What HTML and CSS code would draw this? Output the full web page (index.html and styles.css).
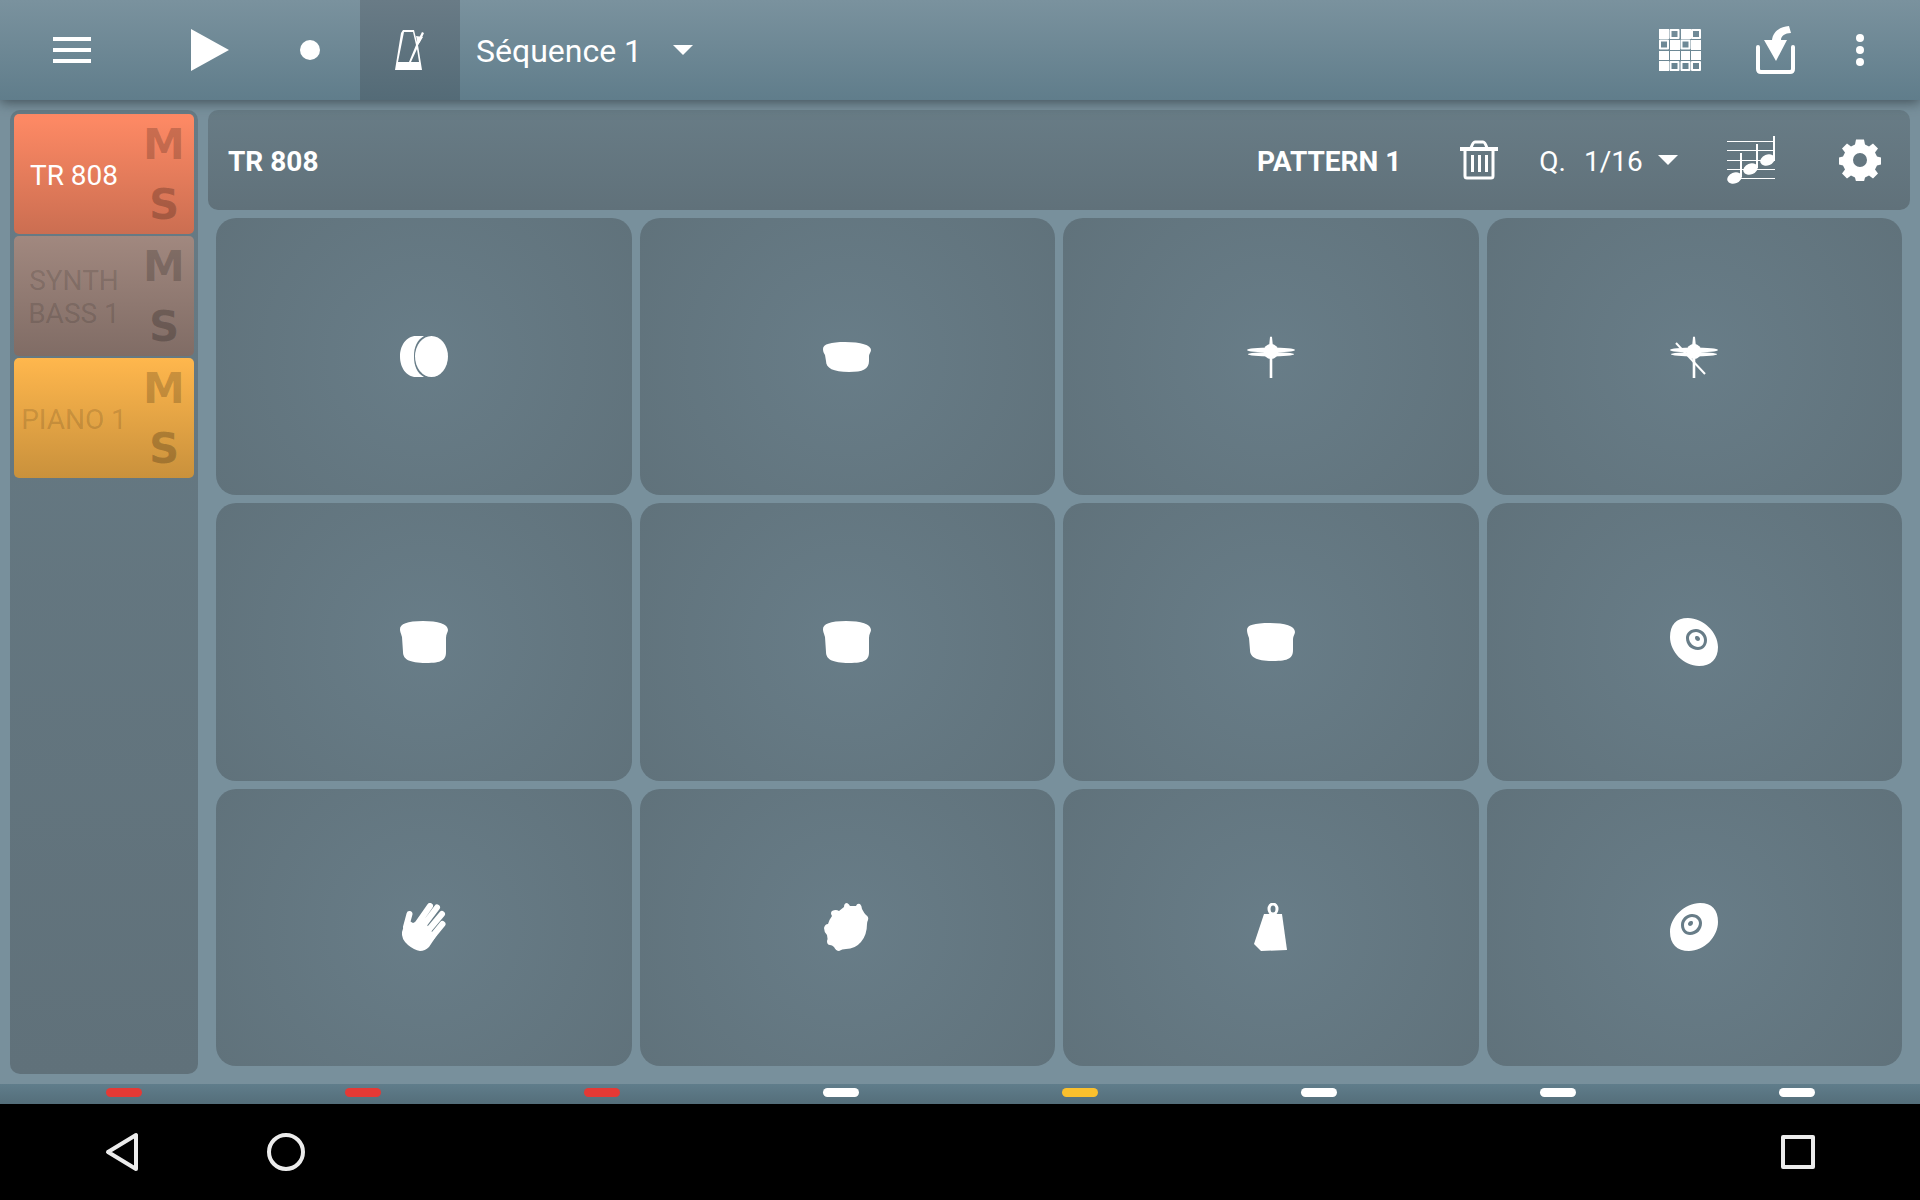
FILE: index.html
```html
<!DOCTYPE html>
<html lang="fr">
<head>
<meta charset="utf-8">
<meta name="viewport" content="width=device-width, initial-scale=1">
<title>Séquence 1</title>
<link rel="stylesheet" href="styles.css">
</head>
<body>
<svg class="sprites" aria-hidden="true">
  <symbol id="tom" viewBox="0 0 48 48"><path d="M0 11C0 6 7 3 23 3c15 0 25 3 25 9 0 2-2 4-2 8v14c0 8-4 11-20 11C9 45 3 41 3 34L2 19C1 15 0 14 0 11z"/></symbol>
  <symbol id="disc" viewBox="0 0 48 48"><path fill-rule="evenodd" d="M18 0C6 0 0 7 0 19c0 15 14 29 29 29 12 0 19-7 19-19C48 14 33 0 18 0zM26 11c6 0 11 5 11 11s-4 10-9 10c-7 0-12-5-12-12 0-5 4-9 10-9zM26 14c-4 0-7 3-7 6 0 5 5 9 9 9s6-3 6-7-4-8-8-8zM27 18c2 0 3 2 3 3s-1 2-2 2-3-1-3-3 1-2 2-2z"/></symbol>
  <symbol id="cymbal" viewBox="0 0 48 48"><ellipse cx="24" cy="17" rx="24" ry="2.400"/><ellipse cx="24" cy="21.200" rx="23" ry="2.200"/><circle cx="24" cy="18.500" r="7.500"/><path d="M23 4q1-1 2 0l1 10h-4zM22.700 24h2.600v21h-2.600z"/></symbol>
</svg>
<div class="app">
  <header class="toolbar">
    <button class="tool tool-menu" aria-label="Menu"><svg width="38" height="26" viewBox="0 0 38 26"><path d="M0 0h38v4H0zM0 11h38v4H0zM0 22h38v4H0z"/></svg></button>
    <button class="tool tool-play" aria-label="Lecture"><svg width="38" height="42" viewBox="0 0 38 42"><path d="M0 0l38 21L0 42z"/></svg></button>
    <button class="tool tool-record" aria-label="Enregistrer"><svg width="20" height="20" viewBox="0 0 20 20"><circle cx="10" cy="10" r="10"/></svg></button>
    <button class="tool tool-metronome" aria-label="Métronome" aria-pressed="true"><svg width="30" height="40" viewBox="0 0 30 40"><path fill-rule="evenodd" d="M8 0h11l3 12 5-10 2 1-4 9-2 3 4 25H0L6 3zM9 2L3 32h11l7-17L18 2zM22 19l-6 13h8z"/><path d="M21 6l7 1-5 8z"/></svg></button>
    <span class="picker picker-sequence"><select aria-label="Séquence"><option>Séquence 1</option></select><svg width="20" height="10" viewBox="0 0 20 10"><path d="M0 0h20L10 10z"/></svg></span>
    <button class="tool tool-grid" aria-label="Motifs"><svg width="42" height="42" viewBox="0 0 42 42">
      <path d="M0 0h10v10H0zM22 0h10v10H22zM11 11h10v10H11zM32 11h10v10H32zM0 22h10v9H0zM11 22h10v9H11zM22 22h9v9h-9zM32 22h10v9H32zM0 32h10v10H0z"/>
      <path class="line" d="M11.500 1h8v8h-8zM33 1h8v8h-8zM1 11.500h8v8H1zM22.500 11.500h8v8h-8zM11.500 33h8v8h-8zM22.500 33h8v8h-8zM33 33h8v8h-8z"/></svg></button>
    <button class="tool tool-export" aria-label="Importer"><svg width="40" height="48" viewBox="0 0 40 48"><path d="M8 14h8C17 6 23 1 33 0l2 7c-6 0-10 3-10 7h6L20 35z"/><path class="tray" d="M2 21v22q0 3 3 3h29q3 0 3-3V21"/></svg></button>
    <button class="tool tool-more" aria-label="Plus"><svg width="8" height="32" viewBox="0 0 8 32"><circle cx="4" cy="4" r="4"/><circle cx="4" cy="16" r="4"/><circle cx="4" cy="28" r="4"/></svg></button>
  </header>

  <div class="workspace">
    <nav class="tracks" aria-label="Pistes">
      <div class="track track-coral"><button class="track-name">TR 808</button><button class="mute">M</button><button class="solo">S</button></div>
      <div class="track track-brown"><button class="track-name">SYNTH BASS 1</button><button class="mute">M</button><button class="solo">S</button></div>
      <div class="track track-amber"><button class="track-name">PIANO 1</button><button class="mute">M</button><button class="solo">S</button></div>
    </nav>

    <main class="editor">
      <section class="panel">
        <h1 class="instrument">TR 808</h1>
        <button class="pattern">PATTERN 1</button>
        <button class="tool tool-trash" aria-label="Supprimer"><svg width="38" height="40" viewBox="0 0 38 40"><path class="stroke" d="M11 8q2-6 4-6h8q2 0 4 6M5 10v26q0 2 2 2h24q2 0 2-2V10"/><path d="M0 7h38v4H0zM11 15h3v17h-3zM18 15h3v17h-3zM25 15h3v17h-3z"/></svg></button>
        <label class="quantize-label" for="quantize">Q.</label>
        <span class="picker picker-quantize"><select id="quantize"><option>1/16</option></select><svg width="20" height="10" viewBox="0 0 20 10"><path d="M0 0h20L10 10z"/></svg></span>
        <button class="tool tool-notes" aria-label="Partition"><svg width="48" height="48" viewBox="0 0 48 48"><path d="M0 5h48v1H0zM0 14h48v1H0zM0 24h48v1H0zM0 33h48v1H0zM12 42h36v1H12zM13 17h2v24h-2zM29 8h2v24h-2zM46 0h2v25h-2z"/><ellipse cx="7.500" cy="42" rx="7.500" ry="5.500" transform="rotate(-22 7.500 42)"/><ellipse cx="23.500" cy="33" rx="7.500" ry="5.500" transform="rotate(-22 23.500 33)"/><ellipse cx="40.500" cy="24" rx="7.500" ry="5.500" transform="rotate(-22 40.500 24)"/></svg></button>
        <button class="tool tool-settings" aria-label="Réglages"><svg width="42" height="42" viewBox="-21 -21 42 42"><path fill-rule="evenodd" d="M-4-20.500h8l1 5 4 2 4-3 5 5-3 4 2 4 4 1v7l-4 1-2 4 3 4-5 5-4-3-4 2-1 4h-8l-1-4-4-2-4 3-5-5 3-4-2-4-4-1v-7l4-1 2-4-3-4 5-5 4 3 4-2zM0-7a7 7 0 1 0 0 14 7 7 0 0 0 0-14z"/></svg></button>
      </section>

      <section class="pads" aria-label="Pads">
        <button class="pad" aria-label="Grosse caisse"><svg width="48" height="48" viewBox="0 0 48 48"><path d="M16 3h8C17 7 14 14 14 23.500S17 40 24 44h-8C6 44 0 34 0 23.500S6 3 16 3z"/><ellipse cx="31.500" cy="23.500" rx="16.500" ry="20.500"/></svg></button>
        <button class="pad" aria-label="Caisse claire"><svg width="48" height="48" viewBox="0 0 48 48"><path d="M0 16c0-5 8-7 22-7 16 0 26 3 26 8 0 2-2 4-2 6v5c0 8-6 11-20 11C10 39 3 35 3 28l-1-6c-1-2-2-3-2-6z"/></svg></button>
        <button class="pad" aria-label="Charleston fermé"><svg width="48" height="48"><use href="#cymbal"/></svg></button>
        <button class="pad" aria-label="Charleston ouvert"><svg width="48" height="48" viewBox="0 0 48 48"><use href="#cymbal"/><path class="stick" d="M6 10l29 31"/></svg></button>
        <button class="pad" aria-label="Tom grave"><svg width="48" height="48"><use href="#tom"/></svg></button>
        <button class="pad" aria-label="Tom médium"><svg width="48" height="48"><use href="#tom"/></svg></button>
        <button class="pad" aria-label="Tom aigu"><svg width="48" height="48" viewBox="0 0 48 48"><path d="M0 12C0 7 7 5 23 5c15 0 25 3 25 9 0 2-2 4-2 7v11c0 8-4 11-20 11C9 43 3 39 3 32L2 20c-1-3-2-5-2-8z"/></svg></button>
        <button class="pad" aria-label="Cymbale crash"><svg width="48" height="48"><use href="#disc"/></svg></button>
        <button class="pad" aria-label="Clap"><svg width="48" height="48" viewBox="0 0 48 48"><path d="M2 29L6 16l7 4 9-4 5 6 5 7 5 3-8 12q-4 4-9 4-6-1-12-6-7-6-6-13z"/><path class="fingers" d="M6 24L9.500 11M16 23L30 3M23 23L37 4.500M26 30L42 11M31 35L42.500 21"/></svg></button>
        <button class="pad" aria-label="Maracas"><svg width="48" height="48" viewBox="0 0 48 48"><path d="M9 8q4-2 7 0l5-4q0-4 3-4 2 1 3 3h6q1-3 4-2 2 2 2 5 2 4 4 6 3 2 2 5-1 2-1 4 0 11-6 18-6 7-15 7-4 0-7 2-3 0-5-4-2-2-4-2-3 0-3-4 1-2 0-6-3-3-3-7 1-4 4-4 1-4 4-8-2-3 0-5z"/></svg></button>
        <button class="pad" aria-label="Cloche"><svg width="48" height="48" viewBox="0 0 48 48"><path d="M17 11h18l5 36-26 1-7-7z"/><ellipse class="ring" cx="26" cy="6" rx="4" ry="5"/></svg></button>
        <button class="pad" aria-label="Cymbale ride"><svg width="48" height="48" viewBox="0 0 48 48"><use href="#disc" transform="matrix(-1 0 0 1 48 0)"/></svg></button>
      </section>
    </main>
  </div>

  <div class="beats" aria-label="Temps">
    <span class="beat"><i class="beat-light red"></i></span>
    <span class="beat"><i class="beat-light red"></i></span>
    <span class="beat"><i class="beat-light red"></i></span>
    <span class="beat"><i class="beat-light"></i></span>
    <span class="beat"><i class="beat-light yellow"></i></span>
    <span class="beat"><i class="beat-light"></i></span>
    <span class="beat"><i class="beat-light"></i></span>
    <span class="beat"><i class="beat-light"></i></span>
  </div>

  <footer class="system">
    <button class="system-button" aria-label="Retour"><svg width="40" height="40" viewBox="0 0 40 40"><path d="M34 3v34L6 20z"/></svg></button>
    <button class="system-button" aria-label="Accueil"><svg width="40" height="40" viewBox="0 0 40 40"><circle cx="20" cy="20" r="17"/></svg></button>
    <button class="system-button recent" aria-label="Applications récentes"><svg width="40" height="40" viewBox="0 0 40 40"><path d="M5 5h30v30H5z"/></svg></button>
  </footer>
</div>
</body>
</html>
```
FILE: styles.css
```css
* {
  box-sizing: border-box;
}

body {
  margin: 0;
  background: #78909c;
  color: #fff;
  font-family: Roboto, sans-serif;
  font-size: 28px;
  line-height: 33px;
}

button,
select {
  margin: 0;
  padding: 0;
  border: 0;
  background: none;
  color: inherit;
  font: inherit;
}

svg {
  display: block;
  flex: none;
  fill: currentColor;
}

.sprites {
  position: absolute;
  width: 0;
  height: 0;
}

.app {
  display: flex;
  flex-direction: column;
  min-height: 100vh;
}

/* Top toolbar */

.toolbar {
  position: relative;
  display: flex;
  height: 100px;
  background: linear-gradient(#7a929e, #607d8b);
  box-shadow: 0 2px 12px rgba(40, 50, 56, 0.7);
}

.tool {
  display: flex;
  flex: none;
  align-items: center;
  justify-content: center;
}

.tool-menu {
  width: 144px;
}

.tool-play {
  width: 132px;
}

.tool-record {
  width: 68px;
}

.tool-metronome {
  width: 100px;
  margin-left: 16px;
  background: linear-gradient(#697b86, #546b77);
}

.tool-grid,
.tool-export {
  width: 96px;
}

.tool-more {
  width: 72px;
  margin-right: 24px;
}

.line {
  fill: none;
  stroke: #fff;
  stroke-width: 2;
  stroke-linejoin: round;
}

.tray {
  fill: none;
  stroke: #fff;
  stroke-width: 4;
  stroke-linecap: round;
}

.picker {
  display: flex;
  align-items: center;
}

.picker select {
  padding-top: 2px;
  appearance: none;
}

.picker-sequence {
  gap: 30px;
  margin-right: auto;
  padding-left: 16px;
  font-size: 32px;
  line-height: 40px;
}

/* Workspace */

.workspace {
  display: flex;
  flex: 1;
  gap: 10px;
  padding: 10px;
}

.tracks {
  display: flex;
  flex: none;
  flex-direction: column;
  gap: 2px;
  width: 188px;
  padding: 4px;
  border-radius: 10px;
  background: linear-gradient(#677b85, #60717a);
}

.track {
  display: grid;
  grid-template: 60px 60px / 120px 60px;
  border-radius: 5px;
}

.track-coral {
  background: linear-gradient(#ff8a65, #cb6e51);
}

.track-brown {
  background: linear-gradient(#a1887f, #806c65);
}

.track-amber {
  background: linear-gradient(#ffb74d, #c9913c);
}

.track-name {
  grid-row: 1 / 3;
  padding: 2px 4px 0;
  color: rgba(0, 0, 0, 0.15);
}

.track-coral .track-name {
  color: #fff;
}

.mute,
.solo {
  padding-top: 2px;
  font: bold 42px/50px "DejaVu Sans", sans-serif;
}

.mute {
  color: rgba(0, 0, 0, 0.2);
}

.solo {
  color: rgba(0, 0, 0, 0.22);
}

/* Editor */

.editor {
  display: flex;
  flex: 1;
  flex-direction: column;
}

.panel {
  display: flex;
  align-items: center;
  height: 100px;
  padding: 0 20px;
  border-radius: 10px;
  background: linear-gradient(#687c86, #60717a);
}

.instrument {
  margin: 0 auto 0 0;
  padding-top: 2px;
  font-size: 28px;
}

.pattern {
  padding-top: 2px;
  font-weight: bold;
}

.tool-trash {
  width: 80px;
  margin-left: 38px;
}

.quantize-label {
  margin-left: 20px;
  padding-top: 2px;
}

.picker-quantize {
  gap: 15px;
  margin-left: 18px;
}

.tool-notes {
  width: 108px;
  margin-left: 19px;
}

.tool-settings {
  width: 60px;
  margin-left: 25px;
}

.stroke {
  fill: none;
  stroke: #fff;
  stroke-width: 3;
}

.pads {
  display: grid;
  flex: 1;
  grid-template-columns: repeat(4, 1fr);
  grid-auto-rows: 1fr;
  gap: 8px;
  padding: 8px;
}

.pad {
  display: flex;
  align-items: center;
  justify-content: center;
  border-radius: 20px;
  background: radial-gradient(circle farthest-corner, #687d88, #60727b);
}

.fingers {
  fill: none;
  stroke: #fff;
  stroke-width: 6;
  stroke-linecap: round;
}

.stick {
  stroke: #fff;
  stroke-width: 2;
}

.ring {
  fill: none;
  stroke: #fff;
  stroke-width: 3;
}

/* Beat lights */

.beats {
  display: flex;
  height: 20px;
  padding: 4px 4px 0;
  background: linear-gradient(#607d8b, #546e7a);
}

.beat {
  display: flex;
  flex: 1;
  justify-content: center;
}

.beat-light {
  width: 36px;
  height: 9px;
  border-radius: 5px;
  background: #fff;
}

.red {
  background: #e53935;
}

.yellow {
  background: #fbc02d;
}

/* System navigation */

.system {
  display: flex;
  align-items: center;
  height: 96px;
  padding: 0 102px;
  background: #000;
}

.system-button {
  margin-right: 124px;
}

.system-button svg {
  fill: none;
  stroke: #ececec;
  stroke-width: 4;
  stroke-linejoin: round;
}

.recent {
  margin: 0 0 0 auto;
}
```
